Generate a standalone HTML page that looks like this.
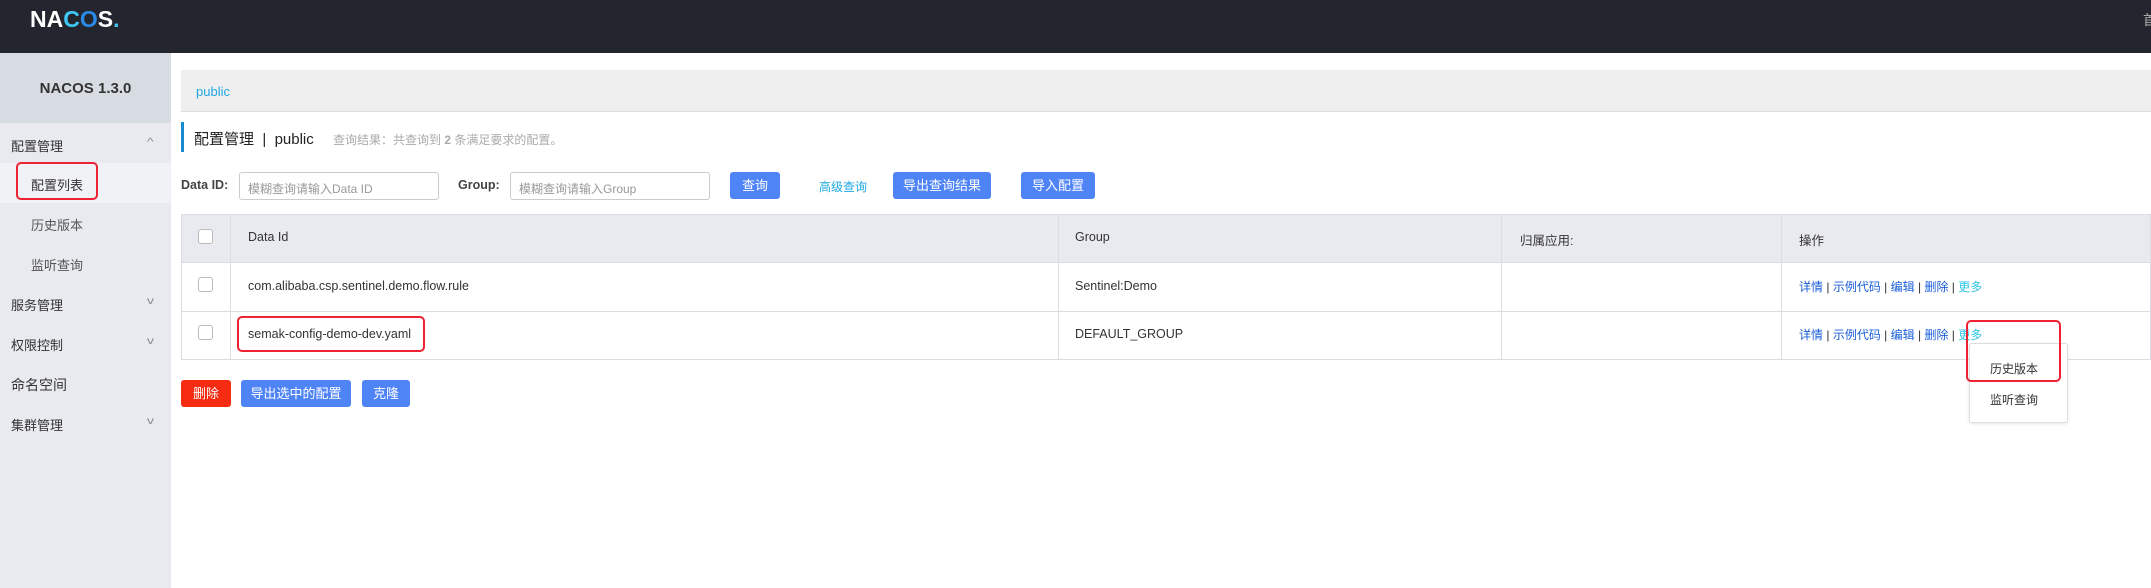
<!DOCTYPE html>
<html><head><meta charset="utf-8"><style>
*{box-sizing:border-box;margin:0;padding:0}
body{width:2151px;height:588px;overflow:hidden;background:#fff;font-family:"Liberation Sans","Noto Sans CJK SC",sans-serif;font-size:12.5px;color:#333;position:relative}
.a{position:absolute}
.hdr{left:0;top:0;width:2151px;height:53px;background:#23262e}
.side{left:0;top:53px;width:171px;height:535px;background:#e8eaef}
.ver{left:0;top:53px;width:171px;height:70px;background:#d7dbe2;text-align:center;line-height:72px;font-weight:bold;font-size:15px;color:#333}
.mi{left:11px;font-size:13px;color:#333}
.sub{left:31px;font-size:13px;color:#555}
.chev{left:148px;font-size:10px;color:#888;transform:scaleX(1.4)}
.btn{color:#fff;border-radius:3px;text-align:center;font-size:13px;line-height:27px;height:27px}
.blue{background:#4f84f7}
.rb{border:2px solid #ee2233;border-radius:5px}
.lnk{color:#1a5ed8}
</style></head><body>
<div class="a hdr"></div>
<div class="a" style="left:30px;top:6px;font-size:23px;font-weight:bold;color:#fff;font-family:'Liberation Sans',sans-serif">NA<span style="color:#3fc8f5">C</span><span style="color:#2a8ae5">O</span>S<span style="color:#3fc8f5">.</span></div>
<div class="a" style="left:2143px;top:10px;color:#aaa;font-size:14px">首</div>
<div class="a side"></div>
<div class="a ver">NACOS 1.3.0</div>
<div class="a mi" style="top:136px">配置管理</div><div class="a chev" style="top:137px">^</div>
<div class="a" style="left:0;top:163px;width:171px;height:40px;background:#f1f2f5"></div>
<div class="a sub" style="top:175px;color:#333">配置列表</div>
<div class="a rb" style="left:16px;top:162px;width:82px;height:38px"></div>
<div class="a sub" style="top:215px">历史版本</div>
<div class="a sub" style="top:255px">监听查询</div>
<div class="a mi" style="top:295px">服务管理</div><div class="a chev" style="top:296px">v</div>
<div class="a mi" style="top:335px">权限控制</div><div class="a chev" style="top:336px">v</div>
<div class="a mi" style="top:375px;font-size:14px">命名空间</div>
<div class="a mi" style="top:415px">集群管理</div><div class="a chev" style="top:416px">v</div>

<div class="a" style="left:181px;top:70px;width:1970px;height:42px;background:#efefef;border-bottom:1px solid #ddd"></div>
<div class="a" style="left:196px;top:84px;color:#1fa8e0;font-size:13px">public</div>
<div class="a" style="left:181px;top:122px;width:3px;height:30px;background:#1a8ad0"></div>
<div class="a" style="left:194px;top:128px;font-size:15px;color:#222">配置管理 &nbsp;|&nbsp; public</div>
<div class="a" style="left:333px;top:131px;font-size:12px;color:#aaa">查询结果：共查询到 <b>2</b> 条满足要求的配置。</div>

<div class="a" style="left:181px;top:178px;font-weight:bold;color:#444">Data ID:</div>
<div class="a" style="left:239px;top:172px;width:200px;height:28px;border:1px solid #ccc;border-radius:3px;padding:7px 8px;color:#999;font-size:12px">模糊查询请输入Data ID</div>
<div class="a" style="left:458px;top:178px;font-weight:bold;color:#444">Group:</div>
<div class="a" style="left:510px;top:172px;width:200px;height:28px;border:1px solid #ccc;border-radius:3px;padding:7px 8px;color:#999;font-size:12px">模糊查询请输入Group</div>
<div class="a btn blue" style="left:730px;top:172px;width:50px">查询</div>
<div class="a" style="left:819px;top:178px;color:#1fa8e0;font-size:12px">高级查询</div>
<div class="a btn blue" style="left:893px;top:172px;width:98px">导出查询结果</div>
<div class="a btn blue" style="left:1021px;top:172px;width:74px">导入配置</div>

<div class="a" style="left:181px;top:214px;width:1970px;height:146px;border:1px solid #dcdde2"></div>
<div class="a" style="left:181px;top:214px;width:1970px;height:49px;background:#e9eaef;border:1px solid #dcdde2"></div>
<div class="a" style="left:181px;top:311px;width:1970px;height:1px;background:#dcdde2"></div>
<div class="a" style="left:230px;top:214px;width:1px;height:146px;background:#dcdde2"></div>
<div class="a" style="left:1058px;top:214px;width:1px;height:146px;background:#dcdde2"></div>
<div class="a" style="left:1501px;top:214px;width:1px;height:146px;background:#dcdde2"></div>
<div class="a" style="left:1781px;top:214px;width:1px;height:146px;background:#dcdde2"></div>
<div class="a" style="left:198px;top:229px;width:15px;height:15px;border:1px solid #bbb;border-radius:3px;background:#fff"></div>
<div class="a" style="left:198px;top:277px;width:15px;height:15px;border:1px solid #bbb;border-radius:3px"></div>
<div class="a" style="left:198px;top:325px;width:15px;height:15px;border:1px solid #bbb;border-radius:3px"></div>
<div class="a" style="left:248px;top:230px">Data Id</div>
<div class="a" style="left:1075px;top:230px">Group</div>
<div class="a" style="left:1520px;top:230px">归属应用:</div>
<div class="a" style="left:1799px;top:230px">操作</div>
<div class="a" style="left:248px;top:279px">com.alibaba.csp.sentinel.demo.flow.rule</div>
<div class="a" style="left:1075px;top:279px">Sentinel:Demo</div>
<div class="a" style="left:248px;top:327px">semak-config-demo-dev.yaml</div>
<div class="a rb" style="left:237px;top:316px;width:188px;height:36px"></div>
<div class="a" style="left:1075px;top:327px">DEFAULT_GROUP</div>
<div class="a" style="left:1799px;top:278px;font-size:12px"><span class="lnk">详情</span> | <span class="lnk">示例代码</span> | <span class="lnk">编辑</span> | <span class="lnk">删除</span> | <span style="color:#2fc4e6">更多</span></div>
<div class="a" style="left:1799px;top:326px;font-size:12px"><span class="lnk">详情</span> | <span class="lnk">示例代码</span> | <span class="lnk">编辑</span> | <span class="lnk">删除</span> | <span style="color:#2fc4e6">更多</span></div>

<div class="a btn" style="left:181px;top:380px;width:50px;background:#f52c12">删除</div>
<div class="a btn blue" style="left:241px;top:380px;width:110px">导出选中的配置</div>
<div class="a btn blue" style="left:362px;top:380px;width:48px">克隆</div>

<div class="a" style="left:1969px;top:343px;width:99px;height:80px;background:#fff;border:1px solid #ddd;border-radius:3px;box-shadow:0 1px 3px rgba(0,0,0,.1)"></div>
<div class="a" style="left:1990px;top:360px;font-size:12px">历史版本</div>
<div class="a" style="left:1990px;top:391px;font-size:12px">监听查询</div>
<div class="a rb" style="left:1966px;top:320px;width:95px;height:62px"></div>
</body></html>
